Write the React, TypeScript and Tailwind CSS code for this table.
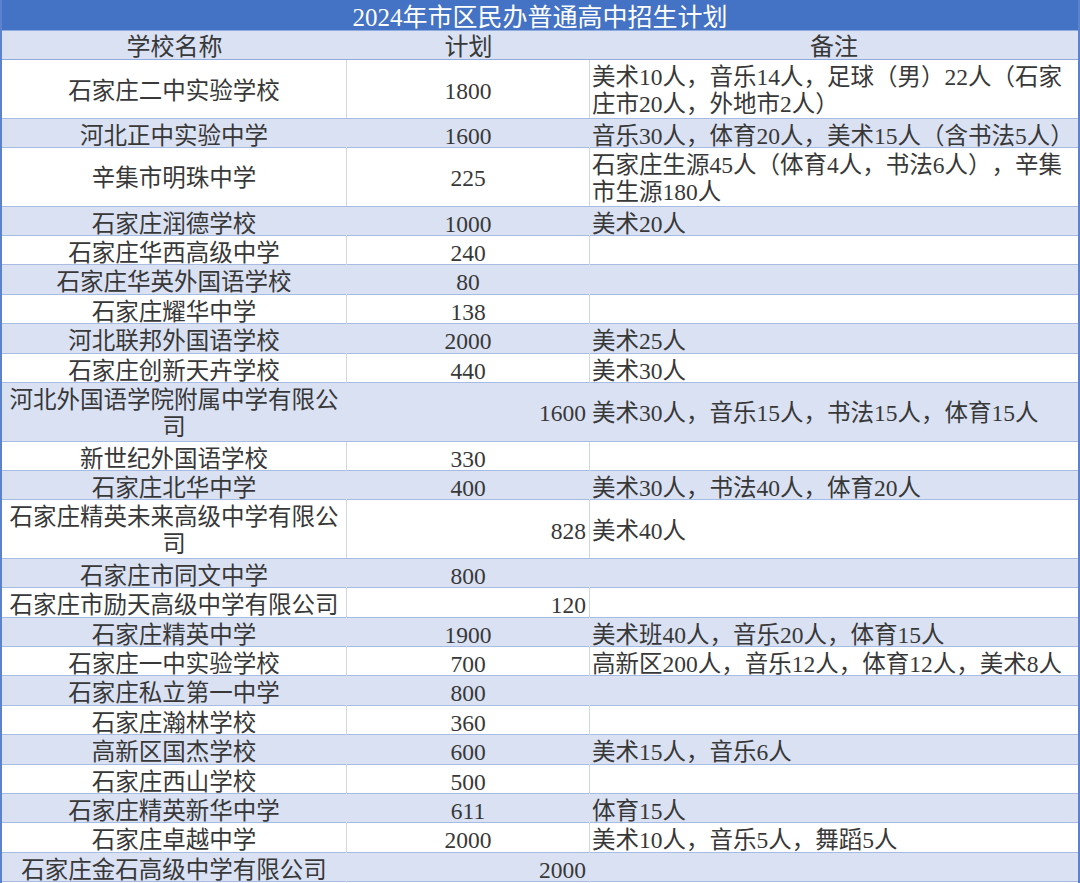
import React from 'react';

type Row = {
  name: string[];
  plan: string;
  note?: string[];
  planRight?: boolean;
  tall?: boolean;
};

const rows: Row[] = [
  { name: ['石家庄二中实验学校'], plan: '1800', note: ['美术10人，音乐14人，足球（男）22人（石家', '庄市20人，外地市2人）'], tall: true },
  { name: ['河北正中实验中学'], plan: '1600', note: ['音乐30人，体育20人，美术15人（含书法5人）'] },
  { name: ['辛集市明珠中学'], plan: '225', note: ['石家庄生源45人（体育4人，书法6人），辛集', '市生源180人'], tall: true },
  { name: ['石家庄润德学校'], plan: '1000', note: ['美术20人'] },
  { name: ['石家庄华西高级中学'], plan: '240' },
  { name: ['石家庄华英外国语学校'], plan: '80' },
  { name: ['石家庄耀华中学'], plan: '138' },
  { name: ['河北联邦外国语学校'], plan: '2000', note: ['美术25人'] },
  { name: ['石家庄创新天卉学校'], plan: '440', note: ['美术30人'] },
  { name: ['河北外国语学院附属中学有限公', '司'], plan: '1600', planRight: true, note: ['美术30人，音乐15人，书法15人，体育15人'], tall: true },
  { name: ['新世纪外国语学校'], plan: '330' },
  { name: ['石家庄北华中学'], plan: '400', note: ['美术30人，书法40人，体育20人'] },
  { name: ['石家庄精英未来高级中学有限公', '司'], plan: '828', planRight: true, note: ['美术40人'], tall: true },
  { name: ['石家庄市同文中学'], plan: '800' },
  { name: ['石家庄市励天高级中学有限公司'], plan: '120', planRight: true },
  { name: ['石家庄精英中学'], plan: '1900', note: ['美术班40人，音乐20人，体育15人'] },
  { name: ['石家庄一中实验学校'], plan: '700', note: ['高新区200人，音乐12人，体育12人，美术8人'] },
  { name: ['石家庄私立第一中学'], plan: '800' },
  { name: ['石家庄瀚林学校'], plan: '360' },
  { name: ['高新区国杰学校'], plan: '600', note: ['美术15人，音乐6人'] },
  { name: ['石家庄西山学校'], plan: '500' },
  { name: ['石家庄精英新华中学'], plan: '611', note: ['体育15人'] },
  { name: ['石家庄卓越中学'], plan: '2000', note: ['美术10人，音乐5人，舞蹈5人'] },
  { name: ['石家庄金石高级中学有限公司'], plan: '2000', planRight: true },
];

export default function App() {
  return (
    <div className="w-[1080px] h-[883px] overflow-hidden bg-white text-[#383838] text-[23.5px] font-['Liberation_Serif','Noto_Sans_CJK_SC',serif] [text-spacing-trim:space-all] border-x-2 border-[#5b82cc]">
      {/* Title */}
      <div className="h-[31px] bg-[#4472c4] text-white text-[25px] flex items-center justify-center leading-none pt-[4px] border-b border-[#8faadc]">
        2024年市区民办普通高中招生计划
      </div>

      {/* Header */}
      <div className="h-[29px] bg-[#d9e1f2] grid grid-cols-[345px_243px_1fr] border-b border-[#8faadc] leading-none pt-[4px] text-[24px]">
        <div className="flex items-center justify-center">学校名称</div>
        <div className="flex items-center justify-center">计划</div>
        <div className="flex items-center justify-center">备注</div>
      </div>

      {rows.map((r, i) => {
        const blue = i % 2 === 1;
        return (
          <div
            key={i}
            className={`grid grid-cols-[345px_243px_1fr] border-b border-[#a8bce3] leading-[27px] ${r.tall ? 'h-[58.6px]' : 'h-[29.4px]'} ${blue ? 'bg-[#d9e1f2]' : 'bg-white'}`}
          >
            <div className={`flex flex-col items-center justify-center text-center pt-[4px] border-r ${blue ? 'border-[#d9e1f2]' : 'border-[#cfd6e4]'}`}>
              {r.name.map((l, j) => (
                <span key={j} className="whitespace-nowrap">{l}</span>
              ))}
            </div>
            <div className={`flex items-center pt-[4px] border-r ${r.planRight ? 'justify-end pr-[3px]' : 'justify-center'} ${blue ? 'border-[#d9e1f2]' : 'border-[#cfd6e4]'}`}>
              {r.plan}
            </div>
            <div className="flex flex-col justify-center pl-[2px] pt-[4px]">
              {(r.note ?? []).map((l, j) => (
                <span key={j} className="whitespace-nowrap">{l}</span>
              ))}
            </div>
          </div>
        );
      })}
    </div>
  );
}
